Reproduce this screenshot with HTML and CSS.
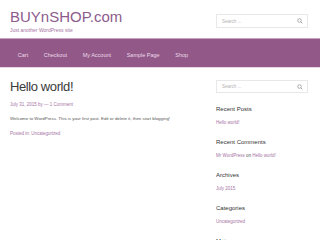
FILE: index.html
```html
<!DOCTYPE html>
<html lang="en">
<head>
  <meta charset="UTF-8">
  <title>BUYnSHOP.com</title>
  <link rel="stylesheet" href="styles.css">
</head>
<body>
  <header class="site-header">
    <div class="branding">
      <a class="site-title" href="#">BUYnSHOP.com</a>
      <p class="site-tagline">Just another WordPress site</p>
    </div>
    <form class="search-form">
      <span class="search-placeholder">Search ...</span>
      <svg class="search-icon" width="6" height="6" viewBox="0 0 12 12"><circle cx="5" cy="5" r="3.6" fill="none" stroke="#888" stroke-width="1.3"/><line x1="7.6" y1="7.6" x2="10.8" y2="10.8" stroke="#888" stroke-width="1.4"/></svg>
    </form>
  </header>

  <nav class="main-nav">
    <a href="#">Cart</a>
    <a href="#">Checkout</a>
    <a href="#">My Account</a>
    <a href="#">Sample Page</a>
    <a href="#">Shop</a>
  </nav>

  <div class="page">
    <main class="content">
      <article class="post">
        <h1 class="post-title">Hello world!</h1>
        <div class="post-meta"><a href="#">July 31, 2015</a> by <a href="#">— 1 Comment</a></div>
        <p class="post-body">Welcome to WordPress. This is your first post. Edit or delete it, then start blogging!</p>
        <div class="post-footer">Posted in: <a href="#">Uncategorized</a></div>
      </article>
    </main>

    <aside class="sidebar">
      <form class="search-form">
        <span class="search-placeholder">Search ...</span>
        <svg class="search-icon" width="6" height="6" viewBox="0 0 12 12"><circle cx="5" cy="5" r="3.6" fill="none" stroke="#888" stroke-width="1.3"/><line x1="7.6" y1="7.6" x2="10.8" y2="10.8" stroke="#888" stroke-width="1.4"/></svg>
      </form>

      <section class="widget">
        <h3>Recent Posts</h3>
        <a href="#">Hello world!</a>
      </section>
      <section class="widget">
        <h3>Recent Comments</h3>
        <p><a href="#">Mr WordPress</a> on <a href="#">Hello world!</a></p>
      </section>
      <section class="widget">
        <h3>Archives</h3>
        <a href="#">July 2015</a>
      </section>
      <section class="widget">
        <h3>Categories</h3>
        <a href="#">Uncategorized</a>
      </section>
      <section class="widget">
        <h3>Meta</h3>
      </section>
    </aside>
  </div>
</body>
</html>
```

FILE: styles.css
```css
* {
  box-sizing: border-box;
  margin: 0;
  padding: 0;
}

body {
  font-family: 'Liberation Sans', Arial, sans-serif;
  background: #fff;
  color: #555;
  width: 320px;
  height: 240px;
  overflow: hidden;
}

a {
  color: #a673a3;
  text-decoration: none;
}

.site-header {
  display: flex;
  justify-content: space-between;
  align-items: flex-start;
  height: 38px;
  padding: 8px 12px 0 10px;
}

.site-title {
  display: block;
  font-size: 15px;
  line-height: 18px;
  color: #8d5b8c;
}

.site-tagline {
  font-size: 5px;
  line-height: 6px;
  margin-top: 1px;
  color: #a673a3;
}

.search-form {
  width: 92px;
  height: 14px;
  border: 1px solid #e8e8e8;
  display: flex;
  align-items: center;
  justify-content: space-between;
  padding: 0 4px 0 5px;
  margin-top: 6px;
}

.search-placeholder {
  font-size: 4.5px;
  color: #b3b3b3;
}

.main-nav {
  display: flex;
  align-items: center;
  height: 30px;
  background: #925888;
  border-top: 1px solid #c9a3c4;
  border-bottom: 1px solid #e8d6e5;
  padding: 3px 0 0 10px;
}

.main-nav a {
  color: #ecdaea;
  font-size: 5.5px;
  padding: 0 7.8px;
}

.page {
  display: flex;
  justify-content: space-between;
  padding: 0 12px 0 10px;
}

.content {
  width: 185px;
}

.post-title {
  font-size: 13px;
  line-height: 16px;
  letter-spacing: -0.4px;
  font-weight: normal;
  color: #3a3a3a;
  margin-top: 11px;
}

.post-meta {
  font-size: 4.5px;
  line-height: 6px;
  color: #a673a3;
  margin-top: 7px;
}

.post-body {
  font-size: 4.4px;
  line-height: 6px;
  color: #555;
  margin-top: 8px;
}

.post-footer {
  font-size: 4.5px;
  line-height: 6px;
  color: #a673a3;
  margin-top: 9px;
}

.sidebar {
  width: 92px;
}

.sidebar .search-form {
  margin-top: 12px;
  height: 13px;
}

.widget {
  margin-top: 12px;
}

.widget h3 {
  font-size: 6px;
  font-weight: normal;
  color: #333;
  line-height: 8px;
}

.widget a,
.widget p {
  font-size: 4.5px;
  line-height: 6px;
  color: #a673a3;
}

.widget > a,
.widget > p {
  display: block;
  margin-top: 7px;
}

.widget p {
  color: #555;
}
```
